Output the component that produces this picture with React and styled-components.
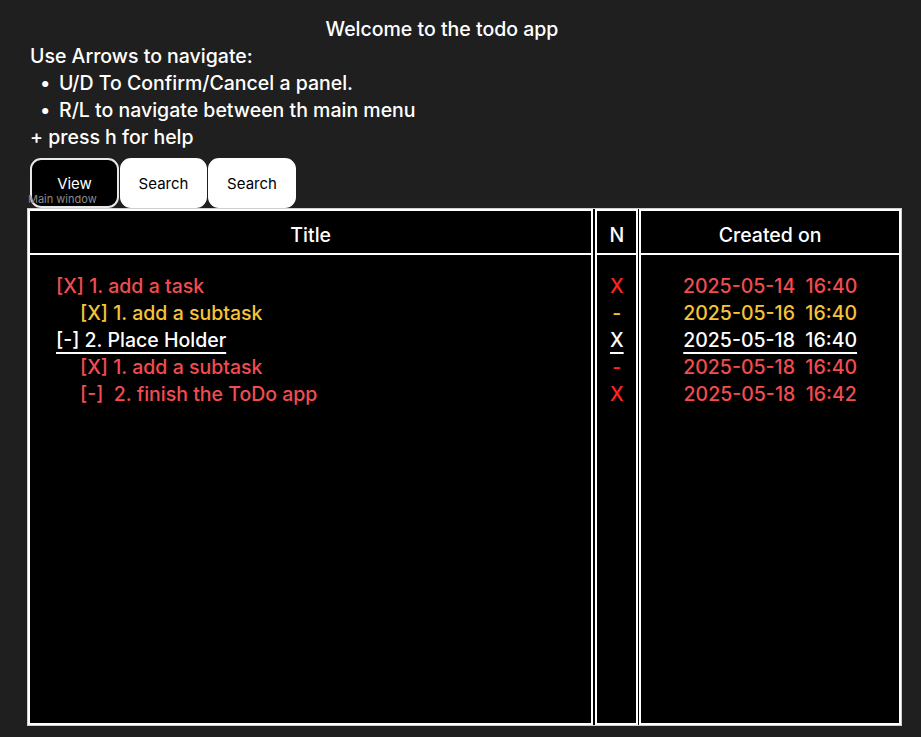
import React from "react";
import styled, { createGlobalStyle } from "styled-components";

const Global = createGlobalStyle`
  html, body { margin: 0; padding: 0; background: #1f1f1f; }
  body { font-family: Inter, "Noto Sans", sans-serif; color: #fff; }
`;

const Page = styled.div`
  width: 921px;
  height: 737px;
  box-sizing: border-box;
  padding: 16px 0 0 27px;
  background: #1f1f1f;
  overflow: hidden;
`;

const BIG = `
  font-size: 19.5px;
  font-weight: 500;
  line-height: 27px;
`;

const Heading = styled.div`
  ${BIG}
  text-align: center;
  padding-right: 64px;
`;

const Line = styled.div`
  ${BIG}
  padding-left: 3px;
`;

const Bullets = styled.ul`
  margin: 0;
  padding: 0 0 0 13px;
  list-style: none;
`;

const Bullet = styled.li`
  display: flex;
  gap: 13px;
  ${BIG}
  &::before {
    content: "•";
    width: 6px;
  }
`;

const Tabs = styled.div`
  display: flex;
  gap: 1px;
  margin-top: 7px;
  padding-left: 3px;
`;

const Tab = styled.div`
  position: relative;
  box-sizing: border-box;
  width: ${(p) => p.$w}px;
  height: 50px;
  border-radius: 11px;
  border: 2px solid ${(p) => (p.$active ? "#e8e8e8" : "#fff")};
  background: ${(p) => (p.$active ? "#000" : "#fff")};
  color: ${(p) => (p.$active ? "#fff" : "#000")};
  display: flex;
  align-items: center;
  justify-content: center;
  font-size: 15px;
  font-weight: 400;
  padding-top: 1px;
`;

const TabNote = styled.span`
  position: absolute;
  left: -4px;
  bottom: 1px;
  font-size: 11px;
  line-height: 12px;
  color: #8a8a8a;
  white-space: nowrap;
`;

const Table = styled.div`
  box-sizing: border-box;
  width: 875px;
  height: 518px;
  border: 1px solid #cfcfcf;
  display: flex;
  gap: 2px;
  background: #000;
`;

const Column = styled.div`
  box-sizing: border-box;
  width: ${(p) => p.$w}px;
  border: 2px solid #fff;
  background: #000;
  display: flex;
  flex-direction: column;
  margin-left: ${(p) => p.$ml || 0}px;
`;

const Header = styled.div`
  box-sizing: border-box;
  height: 44px;
  padding-top: 6px;
  border-bottom: 2px solid #fff;
  display: flex;
  align-items: center;
  justify-content: center;
  ${BIG}
`;

const Body = styled.div`
  padding-top: 18px;
  display: flex;
  flex-direction: column;
  align-items: ${(p) => (p.$center ? "center" : "flex-start")};
  padding-left: ${(p) => p.$pl || 0}px;
`;

const Cell = styled.div`
  ${BIG}
  white-space: pre;
  color: ${(p) => p.$color};
  padding-left: ${(p) => (p.$sub ? 24 : 0)}px;
  & > span {
    text-decoration: ${(p) => (p.$sel ? "underline" : "none")};
    text-decoration-thickness: 2px;
    text-underline-offset: 5px;
  }
`;

const RED = "#f24c4f";
const YEL = "#f7c338";
const WHITE = "#ffffff";
const XRED = "#ff2424";

const rows = [
  { t: "[X] 1. add a task", n: "X", d: "2025-05-14  16:40", c: RED, nc: XRED },
  { t: "[X] 1. add a subtask", n: "-", d: "2025-05-16  16:40", c: YEL, nc: YEL, sub: true },
  { t: "[-] 2. Place Holder", n: "X", d: "2025-05-18  16:40", c: WHITE, nc: WHITE, sel: true },
  { t: "[X] 1. add a subtask", n: "-", d: "2025-05-18  16:40", c: RED, nc: XRED, sub: true },
  { t: "[-]  2. finish the ToDo app", n: "X", d: "2025-05-18  16:42", c: RED, nc: XRED, sub: true },
];

export default function App() {
  return (
    <Page>
      <Global />
      <Heading>Welcome to the todo app</Heading>
      <Line>Use Arrows to navigate:</Line>
      <Bullets>
        <Bullet>U/D To Confirm/Cancel a panel.</Bullet>
        <Bullet>R/L to navigate between th main menu</Bullet>
      </Bullets>
      <Line>+ press h for help</Line>
      <Tabs>
        <Tab $active $w={89}>
          View
          <TabNote>Main window</TabNote>
        </Tab>
        <Tab $w={87}>Search</Tab>
        <Tab $w={88}>Search</Tab>
      </Tabs>
      <Table>
        <Column $w={566}>
          <Header>Title</Header>
          <Body $pl={26}>
            {rows.map((r, i) => (
              <Cell key={i} $color={r.c} $sub={r.sub} $sel={r.sel}>
                <span>{r.t}</span>
              </Cell>
            ))}
          </Body>
        </Column>
        <Column $w={43}>
          <Header>N</Header>
          <Body $center>
            {rows.map((r, i) => (
              <Cell key={i} $color={r.nc} $sel={r.sel}>
                <span>{r.n}</span>
              </Cell>
            ))}
          </Body>
        </Column>
        <Column $w={262} $ml={-1}>
          <Header>Created on</Header>
          <Body $center>
            {rows.map((r, i) => (
              <Cell key={i} $color={r.c} $sel={r.sel}>
                <span>{r.d}</span>
              </Cell>
            ))}
          </Body>
        </Column>
      </Table>
    </Page>
  );
}
